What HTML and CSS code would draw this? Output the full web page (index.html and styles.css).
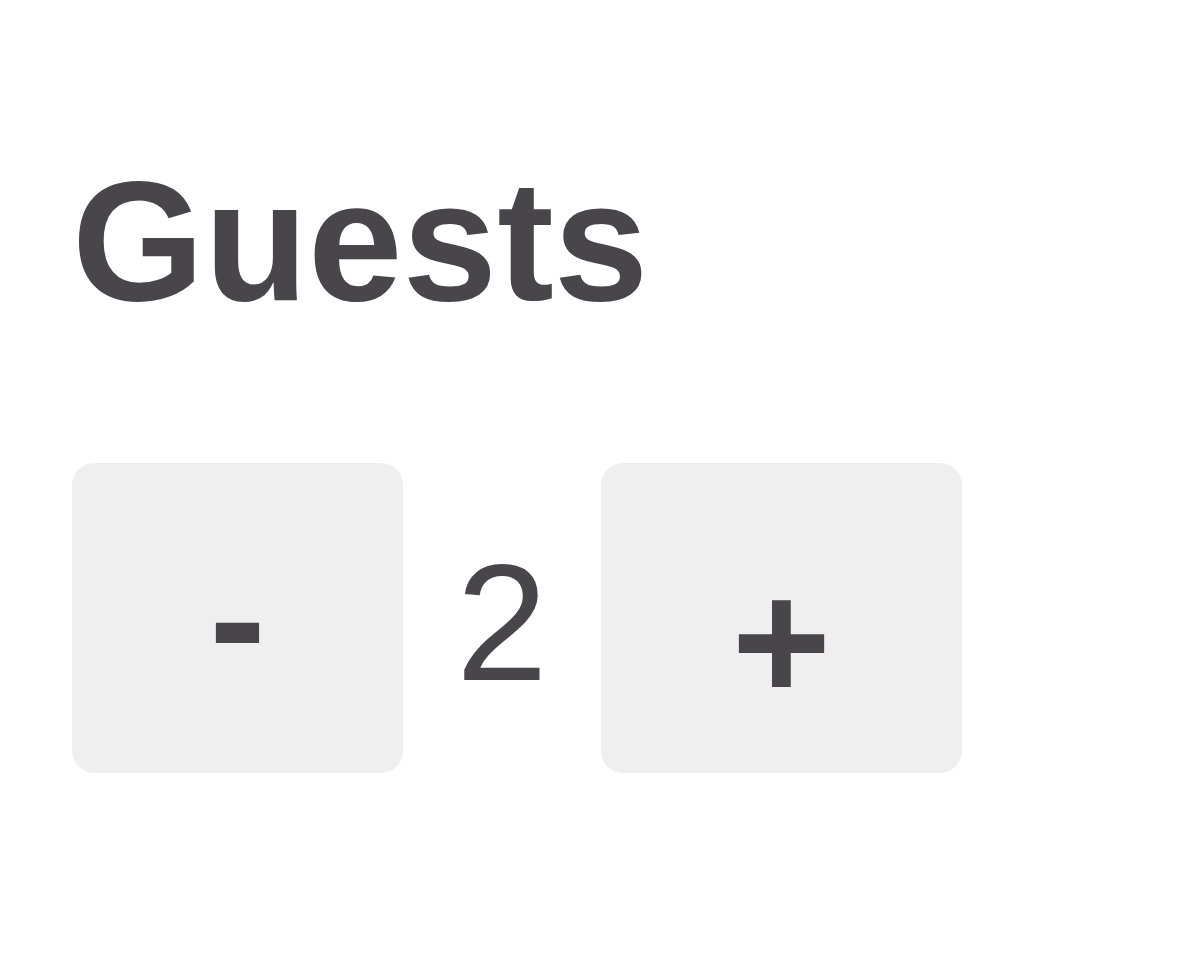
FILE: index.html
```html
<!DOCTYPE html>
<html lang="en">
<head>
<meta charset="utf-8">
<title>Guests</title>
<link rel="stylesheet" href="styles.css">
</head>
<body>
<div class="guests">
  <h2 class="guests-title">Guests</h2>
  <div class="counter">
    <button class="counter-btn counter-btn--minus" type="button">-</button>
    <span class="counter-value">2</span>
    <button class="counter-btn counter-btn--plus" type="button">+</button>
  </div>
</div>
</body>
</html>
```

FILE: styles.css
```css
html, body {
  margin: 0;
  padding: 0;
  background: #ffffff;
}

body {
  font-family: "Liberation Sans", Arial, sans-serif;
  color: #48464b;
}

.guests {
  padding: 156px 0 0 72px;
}

.guests-title {
  margin: 0;
  font-size: 170px;
  line-height: 1;
  font-weight: 700;
  color: #48464b;
}

.counter {
  display: flex;
  align-items: center;
  margin-top: 137px;
}

.counter-btn {
  display: flex;
  align-items: center;
  justify-content: center;
  height: 310px;
  border: none;
  border-radius: 22px;
  background: #efefef;
  color: #48464b;
  font-family: "Liberation Sans", Arial, sans-serif;
  font-weight: 700;
  font-size: 170px;
  line-height: 1;
  padding: 0;
}

.counter-btn--minus {
  width: 331px;
}

.counter-btn--plus {
  width: 361px;
  padding-top: 46px;
}

.counter-value {
  font-size: 165px;
  line-height: 1;
  margin: 10px 53px 0 53px;
}
```
